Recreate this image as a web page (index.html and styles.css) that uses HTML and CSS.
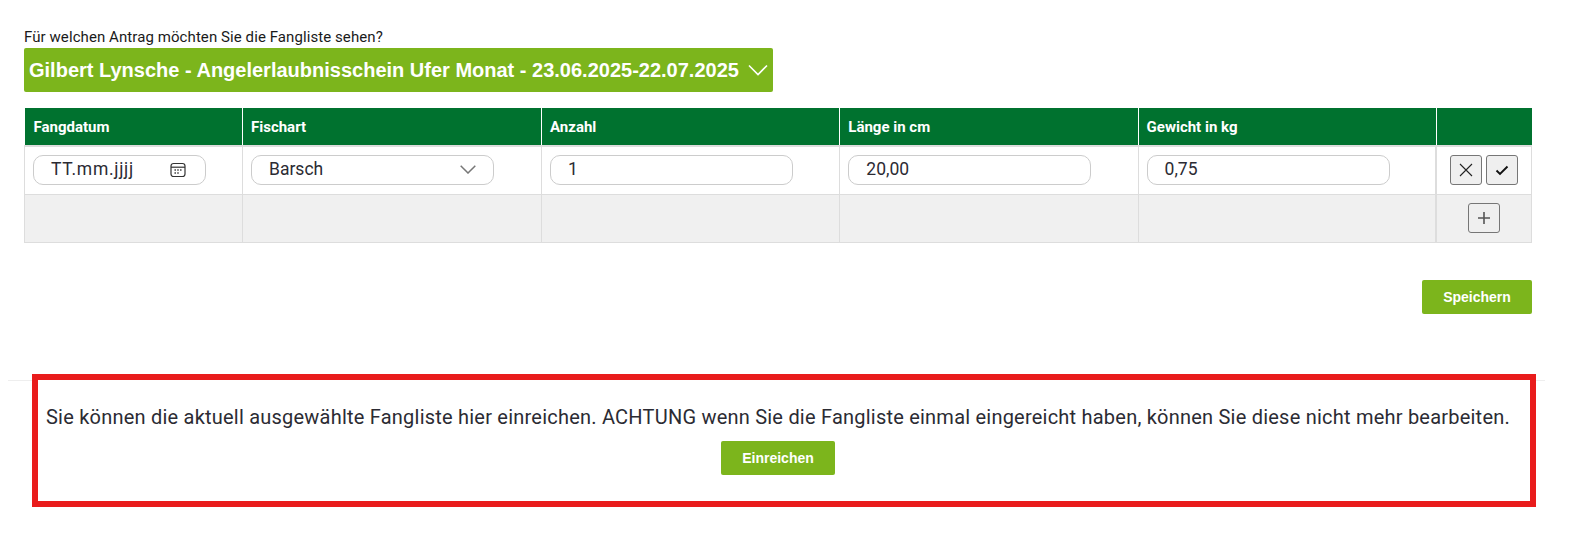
FILE: index.html
```html
<!DOCTYPE html>
<html lang="de">
<head>
    <meta charset="UTF-8">
    <meta name="viewport" content="width=device-width, initial-scale=1.0">
    <title>Fangliste</title>
    <link rel="stylesheet" href="styles.css">
</head>
<body>
    <div class="page">
        <p class="question">Für welchen Antrag möchten Sie die Fangliste sehen?</p>
        <div class="permit-select">
            <span>Gilbert Lynsche - Angelerlaubnisschein Ufer Monat - 23.06.2025-22.07.2025</span>
            <svg class="permit-chevron" viewBox="0 0 20 12"><path d="M1 1.5l9 9 9-9"/></svg>
        </div>

        <table class="catch-table">
            <thead>
                <tr>
                    <th class="col-date">Fangdatum</th>
                    <th class="col-fish">Fischart</th>
                    <th class="col-num">Anzahl</th>
                    <th class="col-num">Länge in cm</th>
                    <th class="col-num">Gewicht in kg</th>
                    <th class="col-actions"></th>
                </tr>
            </thead>
            <tbody>
                <tr>
                    <td>
                        <div class="field field-date">
                            <span>TT.mm.jjjj</span>
                            <svg class="field-icon" viewBox="0 0 16 16">
                                <rect x="1" y="1.5" width="14" height="13" rx="2.5"/>
                                <path d="M1 5.2h14"/>
                                <path class="dots" d="M4.5 8h1.4M7.3 8h1.4M10.1 8h1.4M4.5 11h1.4M7.3 11h1.4"/>
                            </svg>
                        </div>
                    </td>
                    <td>
                        <div class="field field-select">
                            <span>Barsch</span>
                            <svg class="field-chevron" viewBox="0 0 16 9"><path d="M.7.7L8 8l7.3-7.3"/></svg>
                        </div>
                    </td>
                    <td><div class="field">1</div></td>
                    <td><div class="field">20,00</div></td>
                    <td><div class="field">0,75</div></td>
                    <td class="actions">
                        <button class="icon-btn" type="button">
                            <svg viewBox="0 0 16 16"><path d="M2 2l12 12M14 2L2 14"/></svg>
                        </button>
                        <button class="icon-btn" type="button">
                            <svg viewBox="0 0 16 16"><path class="check" d="M2.5 8.5L6 12l7.5-7.5"/></svg>
                        </button>
                    </td>
                </tr>
                <tr class="add-row">
                    <td></td>
                    <td></td>
                    <td></td>
                    <td></td>
                    <td></td>
                    <td class="actions">
                        <button class="icon-btn" type="button">
                            <svg viewBox="0 0 16 16"><path class="plus" d="M8 2v12M2 8h12"/></svg>
                        </button>
                    </td>
                </tr>
            </tbody>
        </table>

        <div class="save-row">
            <button class="btn btn-save" type="button">Speichern</button>
        </div>
    </div>

    <hr class="divider">

    <div class="submit-box">
        <p>Sie können die aktuell ausgewählte Fangliste hier einreichen. ACHTUNG wenn Sie die Fangliste einmal eingereicht haben, können Sie diese nicht mehr bearbeiten.</p>
        <button class="btn btn-submit" type="button">Einreichen</button>
    </div>
</body>
</html>
```

FILE: styles.css
```css
body {
    margin: 0;
    background-color: #fff;
    color: #2b2b33;
    font-family: Roboto, sans-serif;
}

.page {
    padding: 27px 51px 0 24px;
}

.question {
    margin: 0 0 1px;
    font-size: 15px;
    line-height: 20px;
    letter-spacing: 0.08px;
    color: #1a1a1a;
}

.permit-select {
    display: flex;
    align-items: center;
    width: 749px;
    height: 44px;
    box-sizing: border-box;
    padding: 0 5px;
    background-color: #7cb51c;
    border-radius: 2px;
    color: #fff;
    font-family: "Liberation Sans", Arial, sans-serif;
    font-size: 20px;
    font-weight: bold;
    white-space: nowrap;
}

.permit-chevron {
    flex: none;
    width: 20px;
    height: 12px;
    margin-left: 9px;
    fill: none;
    stroke: #fff;
    stroke-width: 1.6;
}

.catch-table {
    width: 1508px;
    margin-top: 16px;
    border-collapse: collapse;
    table-layout: fixed;
}

.catch-table th,
.catch-table td {
    box-sizing: border-box;
}

.catch-table th {
    height: 38px;
    padding: 0 8px;
    background-color: #00722f;
    border-left: 1px solid #fff;
    border-right: 1px solid #fff;
    color: #fff;
    font-size: 15px;
    font-weight: bold;
    text-align: left;
}

.catch-table th:first-child {
    padding-left: 9px;
    border-left: 0;
}

.catch-table th:last-child {
    border-right: 0;
}

.col-date {
    width: 218px;
}

.col-fish {
    width: 299px;
}

.col-num {
    width: 298.3px;
}

.catch-table td {
    height: 48px;
    padding: 0 8px;
    border: 1px solid #ddd;
}

.catch-table thead + tbody tr:first-child td {
    border-top: 2px solid #ddd;
}

.add-row td {
    background-color: #f0f0f0;
}

.field {
    display: flex;
    align-items: center;
    justify-content: space-between;
    width: 243px;
    height: 30px;
    box-sizing: border-box;
    padding: 0 17px 2px;
    border: 1px solid #ccc;
    border-radius: 10px;
    background-color: #fff;
    font-size: 17.5px;
}

.field-date {
    width: 173px;
    padding-right: 19px;
}

.field-date span {
    letter-spacing: 0.7px;
}

.field-icon {
    width: 16px;
    height: 16px;
    margin-top: 2px;
    fill: none;
    stroke: #333;
    stroke-width: 1.2;
}

.field-icon .dots {
    stroke-width: 1.3;
}

.field-chevron {
    width: 16px;
    height: 9px;
    fill: none;
    stroke: #777;
    stroke-width: 1.5;
}

.catch-table .actions {
    padding: 0;
    text-align: center;
    font-size: 0;
    white-space: nowrap;
    border-left-width: 2px;
}

.icon-btn {
    width: 32px;
    height: 30px;
    padding: 6px 7px;
    margin: 0 2px;
    box-sizing: border-box;
    border: 1px solid #767676;
    border-radius: 3px;
    background-color: #efefef;
    vertical-align: middle;
}

.icon-btn svg {
    display: block;
    width: 16px;
    height: 16px;
    fill: none;
    stroke: #222;
    stroke-width: 1.1;
}

.icon-btn .check {
    stroke: #111;
    stroke-width: 1.9;
}

.icon-btn .plus {
    stroke: #555;
    stroke-width: 1.6;
}

.save-row {
    display: flex;
    justify-content: flex-end;
    margin-top: 37px;
}

.btn {
    height: 34px;
    padding: 0;
    border: 0;
    border-radius: 2px;
    background-color: #7cb51c;
    color: #fff;
    font-family: "Liberation Sans", Arial, sans-serif;
    font-size: 14px;
    font-weight: bold;
}

.btn-save {
    width: 110px;
}

.btn-submit {
    width: 114px;
}

.divider {
    margin: 66px 38px 0 8px;
    border: 0;
    border-top: 1px solid #eee;
}

.submit-box {
    width: 1504px;
    height: 133px;
    box-sizing: border-box;
    margin: -7px 0 0 32px;
    padding: 25px 12px 0 0;
    border: 6px solid #e91c1c;
    background-color: #fff;
    text-align: center;
}

.submit-box p {
    margin: 0 0 12px;
    font-size: 20px;
    line-height: 24px;
    letter-spacing: 0.22px;
    white-space: nowrap;
}
```
